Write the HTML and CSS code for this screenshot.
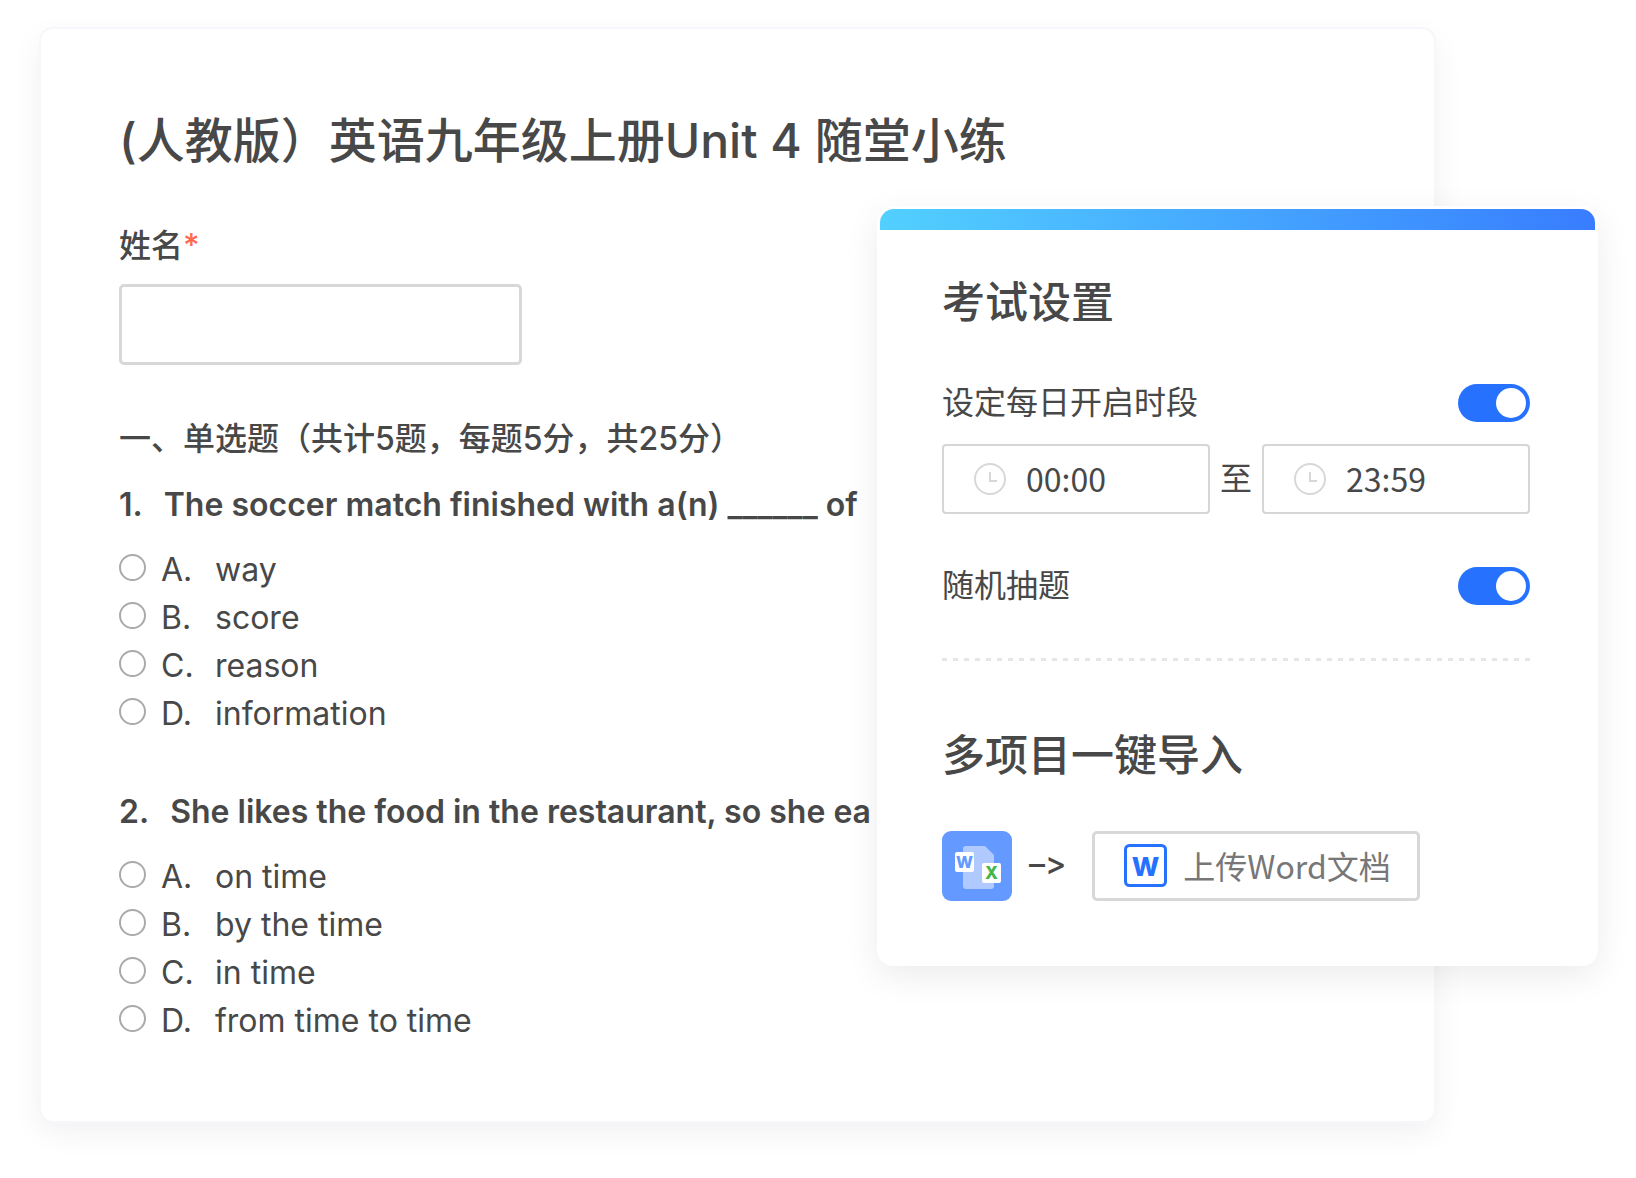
FILE: index.html
```html
<!DOCTYPE html>
<html lang="zh-CN">

<head>
    <meta charset="UTF-8">
    <title>英语九年级随堂小练</title>
    <link rel="stylesheet" href="styles.css">
</head>

<body>
    <main class="stage">
        <form class="paper">
            <h1>(人教版）英语九年级上册Unit 4 随堂小练</h1>

            <label class="field-label" for="name">姓名<span class="required">*</span></label>
            <input class="name-input" type="text" id="name">

            <h2>一、单选题（共计5题，每题5分，共25分）</h2>

            <fieldset class="question">
                <legend><span class="num">1.</span>The soccer match finished with a(n) ______ of</legend>
                <label class="option"><input type="radio" name="q1"><span class="letter">A.</span>way</label>
                <label class="option"><input type="radio" name="q1"><span class="letter">B.</span>score</label>
                <label class="option"><input type="radio" name="q1"><span class="letter">C.</span>reason</label>
                <label class="option"><input type="radio" name="q1"><span class="letter">D.</span>information</label>
            </fieldset>

            <fieldset class="question">
                <legend><span class="num">2.</span>She likes the food in the restaurant, so she ea</legend>
                <label class="option"><input type="radio" name="q2"><span class="letter">A.</span>on time</label>
                <label class="option"><input type="radio" name="q2"><span class="letter">B.</span>by the time</label>
                <label class="option"><input type="radio" name="q2"><span class="letter">C.</span>in time</label>
                <label class="option"><input type="radio" name="q2"><span class="letter">D.</span>from time to time</label>
            </fieldset>
        </form>

        <!-- Settings panel, floats over the paper -->
        <section class="panel">
            <div class="panel-bar"></div>
            <div class="panel-body">
                <h3>考试设置</h3>

                <div class="row">
                    <label for="daily">设定每日开启时段</label>
                    <input class="switch" type="checkbox" id="daily" checked>
                </div>
                <div class="times">
                    <label class="time">
                        <svg width="32" height="32" viewBox="0 0 32 32" fill="none" stroke="#d8d8d8" stroke-width="2">
                            <circle cx="16" cy="16" r="15" />
                            <path d="M16 9v9h7" />
                        </svg>
                        <input type="text" value="00:00" aria-label="开始">
                    </label>
                    <span>至</span>
                    <label class="time">
                        <svg width="32" height="32" viewBox="0 0 32 32" fill="none" stroke="#d8d8d8" stroke-width="2">
                            <circle cx="16" cy="16" r="15" />
                            <path d="M16 9v9h7" />
                        </svg>
                        <input type="text" value="23:59" aria-label="结束">
                    </label>
                </div>
                <div class="row">
                    <label for="random">随机抽题</label>
                    <input class="switch" type="checkbox" id="random" checked>
                </div>

                <div class="divider"></div>

                <h3>多项目一键导入</h3>
                <div class="import">
                    <svg class="icon" width="70" height="70" viewBox="0 0 70 70">
                        <rect width="70" height="70" rx="9" fill="#6499ff" />
                        <path d="M24 15h19l9 9v31a3 3 0 0 1-3 3H24a3 3 0 0 1-3-3V18a3 3 0 0 1 3-3z" fill="#b0caff" />
                        <rect x="13" y="21" width="19" height="20" rx="2" fill="#fff" />
                        <text x="22.500" y="37" font-size="16" fill="#6499ff">W</text>
                        <rect x="40" y="32" width="19" height="20" rx="2" fill="#fff" />
                        <text x="49.500" y="48" font-size="17" fill="#45b549">X</text>
                    </svg>
                    <span class="arrow">–&gt;</span>
                    <button class="upload" type="button">
                        <svg class="icon" width="43" height="43" viewBox="0 0 43 43">
                            <rect x="1.500" y="1.500" width="40" height="40" rx="4" fill="none" stroke="#2672ff" stroke-width="3" />
                            <text x="21.500" y="32" font-size="26" fill="#2672ff">W</text>
                        </svg>
                        上传Word文档
                    </button>
                </div>
            </div>
        </section>
    </main>
</body>

</html>
```

FILE: styles.css
```css
* {
    box-sizing: border-box;
}

body {
    margin: 0;
    background-color: #fff;
    color: #484848;
    font-family: Inter, "Noto Sans CJK SC", sans-serif;
    font-size: 32px;
    line-height: 48px;
}

h1, h2, h3 {
    margin: 0;
    font-weight: 500;
}

.stage {
    position: relative;
    padding: 27px 200px 56px 39px;
}

/* Exam paper */
.paper {
    padding: 76px 80px 76px 78px;
    border: 2px solid #f7f7fb;
    border-radius: 14px;
    box-shadow: 0 10px 30px rgba(0, 0, 0, 0.06);
}

h1 {
    font-size: 48px;
    line-height: 72px;
    margin-bottom: 45px;
}

.field-label {
    display: block;
    font-weight: 500;
}

.required {
    color: #ff6a50;
}

.name-input {
    display: block;
    width: 403px;
    height: 81px;
    margin: 14px 0 50px;
    padding: 0 20px;
    border: 3px solid #d8d8d8;
    border-radius: 5px;
    font: inherit;
}

h2 {
    font-size: 32px;
    line-height: 48px;
    margin-bottom: 18px;
}

.question {
    margin: 0 0 50px;
    padding: 0;
    border: 0;
}

.question:last-child {
    margin-bottom: 0;
}

.question legend {
    padding: 0;
    margin-bottom: 17px;
    font-weight: 600;
    white-space: nowrap;
}

.num {
    margin-right: 21px;
}

.option {
    display: flex;
    align-items: center;
}

.option input {
    appearance: none;
    width: 27px;
    height: 27px;
    margin: 0 15px 6px 0;
    border: 2px solid #aaa;
    border-radius: 50%;
}

.option input:checked {
    border: 8px solid #2672ff;
}

.letter {
    min-width: 54px;
}

/* Settings panel */
.panel {
    position: absolute;
    top: 206px;
    right: 38px;
    width: 721px;
    padding: 3px;
    background-color: #fff;
    border-radius: 16px;
    box-shadow: 0 10px 34px rgba(0, 0, 0, 0.08);
}

.panel-bar {
    height: 21px;
    border-radius: 14px 14px 0 0;
    background: linear-gradient(90deg, #52d0ff, #387dff);
}

.panel-body {
    padding: 40px 65px 62px 62px;
}

h3 {
    font-size: 43px;
    line-height: 64px;
}

.row {
    display: flex;
    align-items: center;
    justify-content: space-between;
}

.row:nth-child(2) {
    margin-top: 45px;
}

.switch {
    appearance: none;
    width: 72px;
    height: 38px;
    margin: 0;
    padding: 4px;
    border-radius: 19px;
    background-color: #ccc;
}

.switch::before {
    content: "";
    display: block;
    width: 30px;
    height: 30px;
    border-radius: 50%;
    background-color: #fff;
}

.switch:checked {
    background-color: #2672ff;
}

.switch:checked::before {
    margin-left: auto;
}

.times {
    display: flex;
    align-items: center;
    gap: 10px;
    margin: 17px 0 48px;
}

.time {
    flex: 1;
    display: flex;
    align-items: center;
    gap: 20px;
    height: 70px;
    min-width: 0;
    padding: 0 30px;
    border: 2px solid #d6d6d6;
    border-radius: 4px;
}

.time svg {
    flex: none;
}

.time input {
    width: 100%;
    min-width: 0;
    padding: 0 0 2px;
    border: 0;
    outline: none;
    color: inherit;
    font: inherit;
    font-family: "Noto Sans CJK SC", sans-serif;
}

.divider {
    height: 3px;
    margin: 48px 0 62px;
    background: repeating-linear-gradient(90deg, #e6e6e6 0 5px, transparent 5px 11px);
}

.import {
    display: flex;
    align-items: center;
    margin-top: 44px;
    gap: 17px;
}

.icon text {
    font-family: Inter, sans-serif;
    font-weight: 800;
    text-anchor: middle;
}

.arrow {
    padding-bottom: 4px;
    font-weight: 500;
    font-variant-ligatures: no-contextual;
}

.upload {
    display: flex;
    align-items: center;
    gap: 16px;
    height: 70px;
    margin-left: 9px;
    padding: 0 26px 2px 29px;
    border: 3px solid #d8d8d8;
    border-radius: 5px;
    background-color: #fff;
    color: #777;
    font: inherit;
    font-family: "Noto Sans CJK SC", sans-serif;
}
```
